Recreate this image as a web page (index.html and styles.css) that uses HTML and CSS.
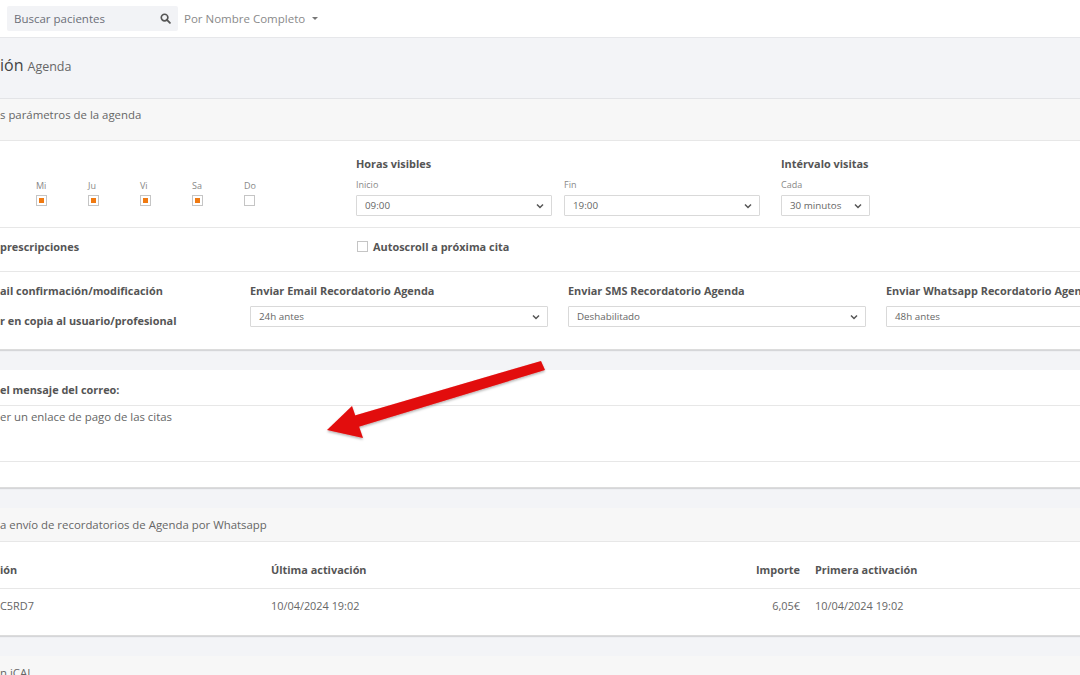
FILE: index.html
```html
<!DOCTYPE html>
<html lang="es">
<head>
<meta charset="utf-8">
<link rel="stylesheet" href="styles.css">
</head>
<body>
<div class="topbar">
  <div class="search">
    <span class="search-text">Buscar pacientes</span>
    <svg class="search-icon" width="11" height="11" viewBox="0 0 12 12"><circle cx="5" cy="5" r="3.6" fill="none" stroke="#555" stroke-width="1.8"/><line x1="7.6" y1="7.6" x2="10.8" y2="10.8" stroke="#555" stroke-width="2" stroke-linecap="round"/></svg>
  </div>
  <div class="search-mode">Por Nombre Completo <span class="caret"></span></div>
</div>

<div class="page-head"><span class="title">ión</span> <span class="subtitle">Agenda</span></div>

<section class="panel">
  <div class="panel-heading tall">s parámetros de la agenda</div>
  <div class="row row-hours">
    <div class="days">
      <div class="day"><span class="small">Mi</span><span class="chk on"></span></div>
      <div class="day"><span class="small">Ju</span><span class="chk on"></span></div>
      <div class="day"><span class="small">Vi</span><span class="chk on"></span></div>
      <div class="day"><span class="small">Sa</span><span class="chk on"></span></div>
      <div class="day"><span class="small">Do</span><span class="chk"></span></div>
    </div>
    <div class="group">
      <div class="label">Horas visibles</div>
      <div class="pair">
        <div class="field"><span class="small">Inicio</span><div class="select w196">09:00<svg class="chev" width="8" height="6" viewBox="0 0 8 6"><path d="M1 1.5 L4 4.5 L7 1.5" fill="none" stroke="#555" stroke-width="1.5"/></svg></div></div>
        <div class="field"><span class="small">Fin</span><div class="select w196">19:00<svg class="chev" width="8" height="6" viewBox="0 0 8 6"><path d="M1 1.5 L4 4.5 L7 1.5" fill="none" stroke="#555" stroke-width="1.5"/></svg></div></div>
      </div>
    </div>
    <div class="group interval">
      <div class="label">Intérvalo visitas</div>
      <div class="field"><span class="small">Cada</span><div class="select w88">30 minutos<svg class="chev" width="8" height="6" viewBox="0 0 8 6"><path d="M1 1.5 L4 4.5 L7 1.5" fill="none" stroke="#555" stroke-width="1.5"/></svg></div></div>
    </div>
  </div>
  <div class="row row-auto">
    <div class="label presc">prescripciones</div>
    <div class="autoscroll"><span class="chk"></span><span class="label">Autoscroll a próxima cita</span></div>
  </div>
  <div class="row row-send">
    <div class="col-first">
      <div class="label">ail confirmación/modificación</div>
      <div class="label">r en copia al usuario/profesional</div>
    </div>
    <div class="col">
      <div class="label">Enviar Email Recordatorio Agenda</div>
      <div class="select">24h antes<svg class="chev" width="8" height="6" viewBox="0 0 8 6"><path d="M1 1.5 L4 4.5 L7 1.5" fill="none" stroke="#555" stroke-width="1.5"/></svg></div>
    </div>
    <div class="col">
      <div class="label">Enviar SMS Recordatorio Agenda</div>
      <div class="select">Deshabilitado<svg class="chev" width="8" height="6" viewBox="0 0 8 6"><path d="M1 1.5 L4 4.5 L7 1.5" fill="none" stroke="#555" stroke-width="1.5"/></svg></div>
    </div>
    <div class="col">
      <div class="label nowrap">Enviar Whatsapp Recordatorio Agenda</div>
      <div class="select">48h antes<svg class="chev" width="8" height="6" viewBox="0 0 8 6"><path d="M1 1.5 L4 4.5 L7 1.5" fill="none" stroke="#555" stroke-width="1.5"/></svg></div>
    </div>
  </div>
</section>

<section class="panel">
  <div class="msg-head label">el mensaje del correo:</div>
  <div class="msg-body">er un enlace de pago de las citas</div>
  <div class="msg-foot"></div>
</section>

<section class="panel">
  <div class="panel-heading">a envío de recordatorios de Agenda por Whatsapp</div>
  <table class="tbl">
    <thead>
      <tr><th class="c1">ión</th><th class="c2">Última activación</th><th class="c3">Importe</th><th class="c4">Primera activación</th></tr>
    </thead>
    <tbody>
      <tr><td class="c1">C5RD7</td><td class="c2">10/04/2024 19:02</td><td class="c3">6,05€</td><td class="c4">10/04/2024 19:02</td></tr>
    </tbody>
  </table>
</section>

<section class="panel last">
  <div class="panel-heading">n iCAL</div>
</section>

<svg class="arrow" width="240" height="100" viewBox="310 350 240 100">
  <defs><filter id="sh" x="-20%" y="-20%" width="140%" height="140%"><feDropShadow dx="0" dy="1.5" stdDeviation="1.2" flood-color="#000" flood-opacity="0.3"/></filter></defs>
  <g filter="url(#sh)" fill="#e20a0a">
    <polygon points="541,361 545,370 358,427 353,416"/>
    <polygon points="327,430 352,406 363,438"/>
  </g>
</svg>
</body>
</html>
```

FILE: styles.css
```css
* { box-sizing: border-box; }
html, body { margin: 0; padding: 0; }
body {
  width: 1080px;
  height: 675px;
  overflow: hidden;
  background: #f3f4f7;
  font-family: "Open Sans", "Noto Sans", sans-serif;
  color: #666;
  position: relative;
}
.topbar {
  height: 38px;
  background: #fff;
  border-bottom: 1px solid #e6e7ea;
  display: flex;
  align-items: center;
  padding-left: 7px;
}
.search {
  width: 171px;
  height: 25px;
  background: #f2f3f6;
  border-radius: 2px;
  display: flex;
  align-items: center;
  justify-content: space-between;
  padding: 0 7px 0 7px;
}
.search-text { font-size: 11.5px; color: #6c6f78; }
.search-icon { display: block; }
.search-mode {
  margin-left: 6px;
  font-size: 11.5px;
  color: #8a8a8a;
  display: flex;
  align-items: center;
}
.caret {
  display: inline-block;
  margin-left: 7px;
  border-left: 3px solid transparent;
  border-right: 3px solid transparent;
  border-top: 3px solid #777;
}
.page-head {
  height: 61px;
  display: flex;
  align-items: center;
  padding-bottom: 6px;
  border-bottom: 1px solid #e3e4e7;
}
.title { font-size: 16px; color: #444; }
.subtitle { font-size: 12.5px; color: #666; margin-left: 4px; padding-top: 3px; }

.panel {
  background: #fff;
  margin-bottom: 20px;
  box-shadow: 0 1px 1px rgba(0,0,0,0.12);
  border-bottom: 1px solid #dcdcdc;
}
.panel.last { margin-bottom: 0; }
.panel-heading {
  height: 34px;
  background: #f7f7f7;
  border-bottom: 1px solid #e7e7e7;
  display: flex;
  align-items: center;
  font-size: 11.4px;
  color: #666;
}
.panel-heading.tall { height: 42px; padding-bottom: 10px; }

.label { font-size: 10.9px; font-weight: 700; color: #555; }
.small { font-size: 9px; color: #888; }
.nowrap { white-space: nowrap; }

.row { border-bottom: 1px solid #e7e7e7; }
.row-hours {
  height: 87px;
  display: flex;
  padding-top: 15px;
}
.days {
  width: 356px;
  display: flex;
  padding-left: 36px;
  padding-top: 23px;
}
.day {
  width: 52px;
  display: flex;
  flex-direction: column;
  gap: 3px;
  align-items: flex-start;
}
.chk {
  display: block;
  width: 11px;
  height: 11px;
  border: 1px solid #c5c5c5;
  background: #fff;
  padding: 2px;
}
.chk.on::after {
  content: "";
  display: block;
  width: 5px;
  height: 5px;
  background: #f07a12;
}
.group { display: flex; flex-direction: column; gap: 7px; }
.pair { display: flex; gap: 12px; }
.field { display: flex; flex-direction: column; gap: 4px; }
.interval { margin-left: 21px; }
.select {
  height: 21px;
  border: 1px solid #d9d9d9;
  border-radius: 1px;
  background: #fff;
  display: flex;
  align-items: center;
  justify-content: space-between;
  padding: 0 7px 0 8px;
  font-size: 9.8px;
  color: #666;
}
.w196 { width: 196px; }
.w88 { width: 89px; }

.row-auto {
  height: 44px;
  display: flex;
  align-items: center;
  padding-bottom: 6px;
}
.presc { width: 357px; }
.autoscroll { display: flex; align-items: center; gap: 5px; }

.row-send {
  height: 77px;
  display: grid;
  grid-template-columns: 230px 298px 298px 298px;
  column-gap: 20px;
  padding-top: 11px;
  border-bottom: none;
}
.col-first { display: flex; flex-direction: column; gap: 15px; }
.col { display: flex; flex-direction: column; gap: 8px; }

.msg-head {
  height: 36px;
  display: flex;
  align-items: center;
  border-bottom: 1px solid #e7e7e7;
  padding-top: 4px;
}
.msg-body {
  height: 56px;
  border-bottom: 1px solid #e7e7e7;
  font-size: 11.4px;
  color: #666;
  padding-top: 3px;
}
.msg-foot { height: 25px; }

.tbl {
  border-collapse: collapse;
  width: 1080px;
}
.tbl th, .tbl td {
  text-align: left;
  padding: 0;
}
.tbl th {
  height: 46px;
  font-size: 10.9px;
  font-weight: 700;
  color: #555;
  vertical-align: bottom;
  padding-bottom: 11px;
  border-bottom: 1px solid #e7e7e7;
}
.tbl td {
  height: 47px;
  font-size: 10.9px;
  color: #666;
  vertical-align: top;
  padding-top: 9px;
}
.tbl .c1 { width: 271px; }
.tbl .c2 { width: 400px; }
.tbl .c3 { width: 129px; text-align: right; }
.tbl .c4 { padding-left: 15px; }

.arrow {
  position: absolute;
  left: 310px;
  top: 350px;
}
```
